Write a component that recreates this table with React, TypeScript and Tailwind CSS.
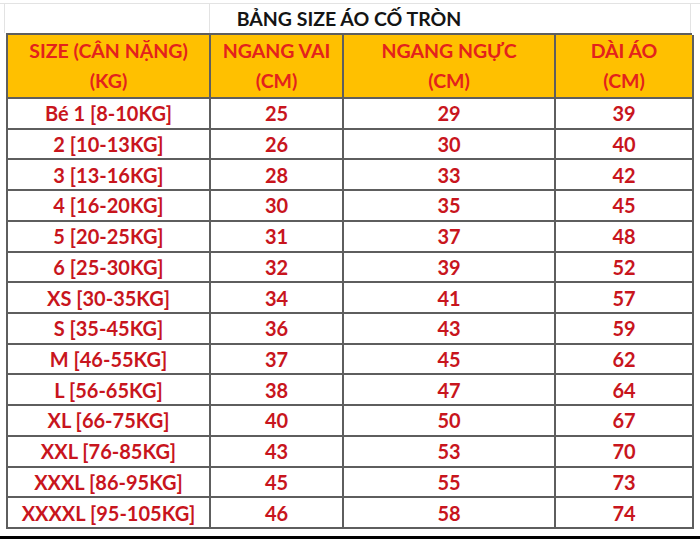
const rows: [string, number, number, number][] = [
  ["Bé 1 [8-10KG]", 25, 29, 39],
  ["2 [10-13KG]", 26, 30, 40],
  ["3 [13-16KG]", 28, 33, 42],
  ["4 [16-20KG]", 30, 35, 45],
  ["5 [20-25KG]", 31, 37, 48],
  ["6 [25-30KG]", 32, 39, 52],
  ["XS [30-35KG]", 34, 41, 57],
  ["S [35-45KG]", 36, 43, 59],
  ["M [46-55KG]", 37, 45, 62],
  ["L [56-65KG]", 38, 47, 64],
  ["XL [66-75KG]", 40, 50, 67],
  ["XXL [76-85KG]", 43, 53, 70],
  ["XXXL [86-95KG]", 45, 55, 73],
  ["XXXXL [95-105KG]", 46, 58, 74],
];

const headers = [
  ["SIZE (CÂN NẶNG)", "(KG)"],
  ["NGANG VAI", "(CM)"],
  ["NGANG NGỰC", "(CM)"],
  ["DÀI ÁO", "(CM)"],
];

export default function App() {
  return (
    <div className="relative h-[539px] w-[700px] overflow-hidden bg-white font-['Lato','Open_Sans',sans-serif]">
      {/* spreadsheet gridlines + title */}
      <div className="pt-[3px]">
        <div className="grid h-[30px] grid-cols-[5px_205px_1fr_1px_9px] border-t border-[#e3e3e3]">
          <div className="border-r border-[#e3e3e3]" />
          <div className="border-r border-[#e3e3e3]" />
          <div />
          <div className="bg-[#e3e3e3]" />
          <div />
        </div>
      </div>
      <div className="pointer-events-none absolute left-0 top-[4px] flex h-[29px] w-[698px] items-center justify-center text-[19.5px] font-bold text-[#141414]">
        BẢNG SIZE ÁO CỐ TRÒN
      </div>

      <div className="ml-[6px] grid h-[496px] w-[686px] grid-cols-[203px_133px_212px_138px] grid-rows-[64px_repeat(14,minmax(0,1fr))] border-l-2 border-t-2 border-[#5e5e5e]">
        {headers.map((h, i) => (
          <div
            key={i}
            className="flex flex-col items-center justify-center border-b-2 border-r-2 border-[#5e5e5e] bg-[#ffc000] text-[19.5px] font-bold leading-[30px] text-[#e3221d]"
          >
            <span>{h[0]}</span>
            <span>{h[1]}</span>
          </div>
        ))}
        {rows.map((r) =>
          r.map((v, j) => (
            <div
              key={r[0] + j}
              className="flex items-center justify-center border-b-2 border-r-2 border-[#5e5e5e] text-[20px] font-bold leading-none text-[#c8151d]"
            >
              {v}
            </div>
          ))
        )}
      </div>

      <div className="absolute bottom-0 left-0 h-[3px] w-full bg-black" />
    </div>
  );
}
